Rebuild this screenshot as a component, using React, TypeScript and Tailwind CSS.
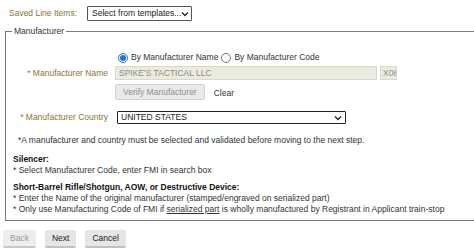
import React from 'react'

function Chevron() {
  return (
    <svg width="8" height="6" viewBox="0 0 8 6" className="shrink-0">
      <path d="M1 1.5 L4 4.5 L7 1.5" fill="none" stroke="#222" strokeWidth="1.3" />
    </svg>
  )
}

function Radio({ checked }: { checked?: boolean }) {
  if (checked) {
    return (
      <span className="flex h-[10px] w-[10px] shrink-0 items-center justify-center rounded-full border border-[#1a73e8] bg-white">
        <span className="block h-[6px] w-[6px] rounded-full bg-[#1a73e8]" />
      </span>
    )
  }
  return <span className="block h-[10px] w-[10px] shrink-0 rounded-full border border-[#767676] bg-white" />
}

function Label({ children }: { children: React.ReactNode }) {
  return <div className="w-[109px] shrink-0 whitespace-nowrap pr-[7px] text-right text-[#8a7434]">{children}</div>
}

function NavButton({ children, disabled }: { children: React.ReactNode; disabled?: boolean }) {
  return (
    <button
      className={
        disabled
          ? 'h-[18px] rounded-[2px] border-b-2 border-[#c8c8c8] bg-[#ededed] px-[7px] text-[#9a9a9a]'
          : 'h-[18px] rounded-[2px] border-b-2 border-[#c0c0c0] bg-[#e6e6e6] px-[7px] text-[#222]'
      }
    >
      {children}
    </button>
  )
}

export default function App() {
  return (
    <div className="h-[251px] w-[474px] overflow-hidden bg-white font-['Liberation_Sans',Arial,sans-serif] text-[8.5px] leading-[11px] text-[#333]">
      <div className="flex items-center gap-[10px] pl-[9px] pt-[6px]">
        <span className="text-[#8a7434]">Saved Line Items:</span>
        <div className="flex h-[15px] w-[105px] items-center justify-between whitespace-nowrap rounded-[1px] border border-[#555] px-[4px] text-[#222]">
          <span>Select from templates...</span>
          <Chevron />
        </div>
      </div>

      <fieldset className="ml-[5px] mt-[5px] border-y border-l border-[#7a7a7a] pb-[5px]">
        <legend className="ml-[6px] px-[2px] text-[#333]">Manufacturer</legend>

        <div className="mt-[15px] flex items-center pl-[112px]">
          <Radio checked />
          <span className="ml-[3px]">By Manufacturer Name</span>
          <span className="ml-[3px]">
            <Radio />
          </span>
          <span className="ml-[3px]">By Manufacturer Code</span>
        </div>

        <div className="mt-[3px] flex items-center">
          <Label>* Manufacturer Name</Label>
          <div className="flex h-[14px] w-[262px] items-center border border-[#d9d9c9] bg-[#ecebdf] px-[3px] text-[#8c8c80]">
            SPIKE'S TACTICAL LLC
          </div>
          <div className="ml-[3px] flex h-[14px] w-[17px] items-center overflow-hidden border border-[#d9d9c9] bg-[#ecebdf] pl-[2px] text-[#8c8c80]">
            X06
          </div>
        </div>

        <div className="mt-[4px] flex items-end pl-[109px]">
          <div className="flex h-[16px] items-center rounded-[2px] border border-[#d2d2d2] bg-[#e9e9e9] px-[7px] text-[#8f8f8f]">
            Verify Manufacturer
          </div>
          <span className="mb-[1px] ml-[9px] text-[#333]">Clear</span>
        </div>

        <div className="mt-[11px] flex items-center">
          <Label>* Manufacturer Country</Label>
          <div className="ml-[2px] flex h-[13px] w-[229px] items-center justify-between rounded-[1px] border border-[#222] px-[3px] text-[#222]">
            <span>UNITED STATES</span>
            <Chevron />
          </div>
        </div>

        <p className="mt-[11px] pl-[12px]">
          *A manufacturer and country must be selected and validated before moving to the next step.
        </p>

        <div className="mt-[8px] pl-[7px]">
          <p className="font-bold text-[#111]">Silencer:</p>
          <p>* Select Manufacturer Code, enter FMI in search box</p>
          <p className="mt-[6px] font-bold text-[#111]">
            Short-Barrel Rifle/Shotgun, AOW, or Destructive Device:
          </p>
          <p>* Enter the Name of the original manufacturer (stamped/engraved on serialized part)</p>
          <p>
            * Only use Manufacturing Code of FMI if <span className="underline">serialized part</span> is
            wholly manufactured by Registrant in Applicant train-stop
          </p>
        </div>
      </fieldset>

      <div className="mt-[9px] flex gap-[9px] pl-[3px]">
        <NavButton disabled>Back</NavButton>
        <NavButton>Next</NavButton>
        <NavButton>Cancel</NavButton>
      </div>
    </div>
  )
}
